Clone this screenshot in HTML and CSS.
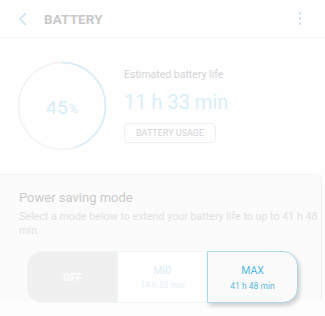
FILE: index.html
```html
<!DOCTYPE html>
<html>
<head>
<meta charset="utf-8">
<link rel="stylesheet" href="styles.css">
</head>
<body>
<div class="app">
  <header class="bar">
    <svg class="back" width="10" height="14" viewBox="0 0 10 14"><path d="M8 1 L2 7 L8 13" fill="none" stroke="#bfe2f2" stroke-width="1.3"/></svg>
    <span class="title">BATTERY</span>
    <span class="dots"><i></i><i></i><i></i></span>
  </header>
  <section class="summary">
    <div class="ring">
      <svg width="90" height="90" viewBox="0 0 90 90">
        <circle cx="45" cy="45" r="43.5" fill="none" stroke="#f2f2f2" stroke-width="1.5"/>
        <circle cx="45" cy="45" r="43.5" fill="none" stroke="#d6ecf8" stroke-width="1.5" stroke-dasharray="123 400" transform="rotate(-90 45 45)"/>
      </svg>
      <div class="pct"><span class="num">45</span><span class="sign">%</span></div>
    </div>
    <div class="info">
      <div class="est">Estimated battery life</div>
      <div class="time">11 h 33 min</div>
      <div class="usage">BATTERY USAGE</div>
    </div>
  </section>
  <section class="card">
    <div class="h">Power saving mode</div>
    <div class="desc">Select a mode below to extend your battery life to up to 41 h 48 min.</div>
    <div class="seg">
      <div class="opt off">OFF</div>
      <div class="opt mid"><span class="m">MID</span><span class="s">14 h 53 min</span></div>
      <div class="opt max"><span class="m">MAX</span><span class="s">41 h 48 min</span></div>
    </div>
  </section>
</div>
</body>
</html>
```
FILE: styles.css
```css
* { box-sizing: border-box; }
html, body { margin: 0; padding: 0; }
body { width: 325px; height: 316px; overflow: hidden; background: #fdfdfd; font-family: Roboto, "Liberation Sans", sans-serif; }
.app { display: flex; flex-direction: column; }
.bar { height: 38px; display: flex; align-items: center; padding: 0 0 0 18px; border-bottom: 1px solid #f5f5f5; background: #fefefe; }
.back { margin-top: 1px; }
.title { margin-left: 16px; font-weight: bold; font-size: 13.5px; color: #c9c9c9; letter-spacing: 0.1px; }
.dots { margin-left: auto; margin-right: 24px; display: flex; flex-direction: column; gap: 2.5px; }
.dots i { display: block; width: 2.5px; height: 2.5px; background: #c8e4f2; border-radius: 1px; }
.summary { height: 136px; display: flex; align-items: flex-start; background: #fefefe; padding: 23px 0 0 17px; }
.ring { position: relative; width: 90px; height: 90px; }
.ring svg { display: block; }
.pct { position: absolute; inset: 0; display: flex; align-items: center; justify-content: center; color: #d6ecf8; padding-top: 2px; }
.num { font-size: 19px; letter-spacing: 0.3px; }
.sign { font-size: 12px; margin-left: 1px; margin-top: 4px; }
.info { margin-left: 17px; padding-top: 7px; }
.est { font-size: 10.5px; color: #d4d4d4; }
.time { font-size: 20px; color: #d8eef9; margin-top: 9px; }
.usage { display: inline-block; margin-top: 9px; border: 1px solid #f0f0f0; border-radius: 4px; font-size: 9px; color: #d4d4d4; padding: 4px 11px 4px; }
.card { background: #fbfbfb; border-right: 1px solid #f0f0f0; border-top: 1px solid #f5f5f5; border-top-right-radius: 6px; border-bottom-right-radius: 6px; margin-right: 3px; padding: 15px 0 0 19px; height: 127px; }
.h { font-size: 13px; color: #cacaca; }
.desc { font-size: 10.7px; color: #e2e2e2; margin-top: 5px; line-height: 14px; width: 300px; }
.seg { display: flex; margin: 13px 0 0 8px; width: 271px; height: 52px; }
.opt { flex: 1; display: flex; flex-direction: column; align-items: center; justify-content: center; }
.off { background: #f0f0f0; border: 1px solid #ecf4f9; border-right: none; border-radius: 15px 0 0 15px; color: #fdfdfd; font-weight: bold; font-size: 10.5px; }
.mid { background: #fefefe; border-top: 1px solid #eef6fa; border-bottom: 1px solid #eef6fa; border-left: 1px solid #eef6fa; }
.mid .m { font-size: 10px; color: #dcedf7; }
.mid .s { font-size: 8.5px; color: #e8f2f8; margin-top: 4px; }
.max { background: #fafafa; border: 1px solid #a9d8eb; border-radius: 0 15px 15px 0; box-shadow: 2px 3px 4px rgba(0,0,0,0.18); }
.max .m { font-size: 10.5px; color: #54b8dc; }
.max .s { font-size: 8.5px; color: #5fb7d8; margin-top: 4px; }
```
